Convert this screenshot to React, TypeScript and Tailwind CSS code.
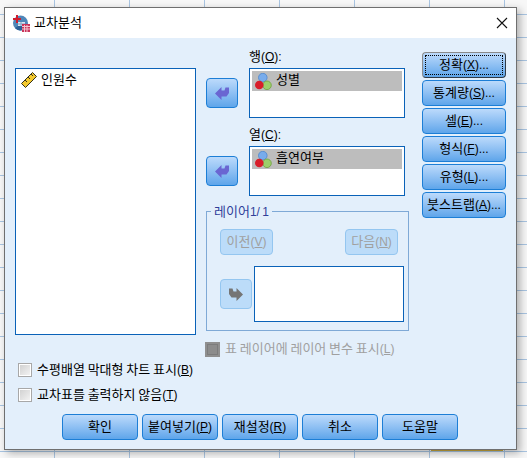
import type { ReactNode } from "react";

const blueBtn =
  "flex items-center justify-center rounded-[4px] border border-[#1c7ed6] bg-gradient-to-b from-[#bcdafb] to-[#5ea5ea] pb-[2px] text-black";

function Label({ text, hot, tail = "" }: { text: string; hot: string; tail?: string }) {
  return (
    <span className="whitespace-nowrap [word-spacing:-0.8px]">
      {text}
      <span className="text-[12px]">
        (<u>{hot}</u>){tail}
      </span>
    </span>
  );
}

function TitleIcon() {
  return (
    <svg width="17" height="17" viewBox="0 0 17 17" className="shrink-0">
      <circle cx="7.500" cy="8" r="7.500" fill="#4f86b8" />
      <path d="M2 13a7.500 7.500 0 0 0 10 1l-4-5z" fill="#2c5f96" />
      <rect x="5" y="7" width="7" height="4" fill="#d7e6f2" />
      <path d="M5 9h7M8 7v4" stroke="#7fa3c4" />
      <path d="M3 0h2v3h3v2H5v3H3V5H0V3h3z" fill="#d01c2c" />
      <rect x="9" y="9" width="8" height="8" fill="#c9345a" />
      <path d="M9 11.500h8M9 14h8M11.500 10v7M14 10v7" stroke="#f3c4cf" />
    </svg>
  );
}

function RulerIcon() {
  return (
    <svg width="16" height="16" viewBox="0 0 16 16" className="shrink-0">
      <path d="M0.500 11.500 11.500 0.500 15.500 4.500 4.500 15.500z" fill="#f4c92e" stroke="#33301c" />
      <path d="M4 8l2 2M7 5l2 2M10 2l2 2" stroke="#33301c" />
    </svg>
  );
}

function BallsIcon() {
  return (
    <svg width="17" height="17" viewBox="0 0 17 17" className="shrink-0">
      <circle cx="7.800" cy="4.600" r="4.300" fill="#78acec" stroke="#4f86cc" strokeWidth="0.800" />
      <circle cx="12" cy="12.300" r="4.300" fill="#9ccf6a" stroke="#6ea23f" strokeWidth="0.800" />
      <circle cx="4.300" cy="12" r="4.300" fill="#d81e2a" />
    </svg>
  );
}

function ArrowButton({ disabled }: { disabled?: boolean }) {
  return (
    <div
      className={
        disabled
          ? "flex h-[30px] w-[32px] shrink-0 items-center justify-center rounded-[4px] border border-[#94c6f0] bg-[#bcdcf9]"
          : "flex h-[30px] w-[32px] shrink-0 items-center justify-center rounded-[4px] border border-[#1c7ed6] bg-gradient-to-b from-[#bcdafb] to-[#5ea5ea]"
      }
    >
      <svg width="14" height="13" viewBox="0 0 14 13" className={disabled ? "scale-x-[-1]" : ""}>
        <path
          d="M0 6.500 6.500 0V3.500H9.500L10.500 0.500H14V6L11.500 9.500H6.500V13z"
          fill={disabled ? "#757575" : "#6a66d2"}
        />
      </svg>
    </div>
  );
}

function TargetList({ item }: { item: string }) {
  return (
    <div className="h-[50px] w-[156px] border border-[#0a62b8] bg-white p-[2px] pb-0">
      <div className="flex h-[20px] w-[150px] items-center gap-[4px] bg-[#bdbdbd] pl-[3px]">
        <BallsIcon />
        <span className="mb-[3px]">{item}</span>
      </div>
    </div>
  );
}

function Check({ children }: { children: ReactNode }) {
  return (
    <div className="flex h-[14px] items-center gap-[5px]">
      <div className="h-[14px] w-[14px] border border-[#a8a8a8] bg-white p-[1px]">
        <div className="h-full w-full bg-gradient-to-br from-[#d2d2d2] to-[#f2f2f2]" />
      </div>
      <span className="mb-[2px]">{children}</span>
    </div>
  );
}

const sideButtons = [
  { text: "통계량", hot: "S" },
  { text: "셀", hot: "E" },
  { text: "형식", hot: "F" },
  { text: "유형", hot: "L" },
  { text: "붓스트랩", hot: "A" },
];

export default function App() {
  return (
    <div className="h-[458px] w-[527px] overflow-hidden bg-[#f7f7f7] bg-[linear-gradient(#c8a83c,#c8a83c),linear-gradient(to_right,#a9c5e2_1px,transparent_1px),linear-gradient(to_bottom,#a9c5e2_1px,transparent_1px)] bg-[size:72px_1px,75px_100%,100%_23px] bg-[position:431px_450px,54px_0,0_14px] [background-repeat:no-repeat,repeat,repeat] pl-[4px] pt-[7px] font-['Liberation_Sans','Noto_Sans_CJK_KR',sans-serif] text-[13px] leading-none text-black">
      <div className="flex h-[443px] w-[513px] flex-col border border-[#6f6f6f] bg-[#e3effb] shadow-[3px_3px_8px_rgba(0,0,0,0.3)]">
        <div className="flex h-[30px] shrink-0 items-center bg-white pl-[8px] pr-[7px]">
          <TitleIcon />
          <span className="mb-[2px] ml-[4px]">교차분석</span>
          <svg width="14" height="14" viewBox="0 0 14 14" className="ml-auto">
            <path d="M2 2l10 10M12 2 2 12" stroke="#111" strokeWidth="1.100" />
          </svg>
        </div>

        <div className="flex h-[319px] shrink-0 pl-[10px]">
          <div className="mt-[30px] flex h-[267px] w-[181px] items-start gap-[4px] border border-[#0a62b8] bg-white pl-[5px] pt-[3px]">
            <RulerIcon />
            <span className="mt-[1px]">인원수</span>
          </div>

          <div className="ml-[10px] w-[203px] pt-[10px]">
            <div className="pl-[43px]">
              <div className="flex h-[20px] items-start pt-[2px]">
                <Label text="행" hot="O" tail=":" />
              </div>
            </div>
            <div className="flex items-center gap-[11px]">
              <ArrowButton />
              <TargetList item="성별" />
            </div>

            <div className="mt-[8px] pl-[43px]">
              <div className="flex h-[20px] items-start pt-[2px]">
                <Label text="열" hot="C" tail=":" />
              </div>
            </div>
            <div className="flex items-center gap-[11px]">
              <ArrowButton />
              <TargetList item="흡연여부" />
            </div>

            <div className="relative mt-[15px] h-[120px] w-[203px] border border-[#7fa9d6] pb-0 pl-[13px] pr-[4px] pt-[17px]">
              <span className="absolute left-[4px] top-[-7px] bg-[#e3effb] px-[3px] text-[#30409a] [word-spacing:-1px]">
                레이어<span className="text-[12px]">1/ 1</span>
              </span>
              <div className="flex justify-between pr-[6px]">
                <div className="flex h-[26px] w-[53px] items-center justify-center rounded-[4px] border border-[#94c6f0] bg-[#bcdcf9] pb-[2px] text-[#a0a0a0]">
                  <Label text="이전" hot="V" />
                </div>
                <div className="flex h-[26px] w-[53px] items-center justify-center rounded-[4px] border border-[#94c6f0] bg-[#bcdcf9] pb-[2px] text-[#a0a0a0]">
                  <Label text="다음" hot="N" />
                </div>
              </div>
              <div className="mt-[11px] flex items-center gap-[2px]">
                <ArrowButton disabled />
                <div className="h-[56px] w-[150px] border border-[#0a62b8] bg-white" />
              </div>
            </div>

            <div className="-ml-[1px] mt-[11px] flex h-[15px] items-center gap-[5px] text-[#a0a0a0]">
              <div className="h-[15px] w-[15px] border-2 border-[#8f8f8f] bg-[#7c7c7c] p-[1px]">
                <div className="h-full w-full bg-[#8c8c8c]" />
              </div>
              <span className="mb-[2px]">
                <Label text="표 레이어에 레이어 변수 표시" hot="L" />
              </span>
            </div>
          </div>

          <div className="ml-[13px] mt-[14px] flex w-[84px] flex-col gap-[2px]">
            <div className="h-[26px] rounded-[4px] border border-[#8a8a8a] border-b-[#2f3b48] border-r-[#2f3b48] bg-gradient-to-b from-[#bcdafb] to-[#5ea5ea] p-[2px]">
              <div className="flex h-full items-center justify-center border border-dotted border-black pb-[2px]">
                <Label text="정확" hot="X" tail="..." />
              </div>
            </div>
            {sideButtons.map((b) => (
              <div key={b.hot} className={`${blueBtn} h-[26px]`}>
                <Label text={b.text} hot={b.hot} tail="..." />
              </div>
            ))}
          </div>
        </div>

        <div className="ml-[13px] mt-[6px] flex flex-col gap-[11px]">
          <Check>
            <Label text="수평배열 막대형 차트 표시" hot="B" />
          </Check>
          <Check>
            <Label text="교차표를 출력하지 않음" hot="T" />
          </Check>
        </div>

        <div className="ml-[57px] mt-[12px] flex gap-[4px]">
          <div className={`${blueBtn} h-[26px] w-[76px]`}>확인</div>
          <div className={`${blueBtn} h-[26px] w-[76px]`}>
            <Label text="붙여넣기" hot="P" />
          </div>
          <div className={`${blueBtn} h-[26px] w-[76px]`}>
            <Label text="재설정" hot="R" />
          </div>
          <div className={`${blueBtn} h-[26px] w-[76px]`}>취소</div>
          <div className={`${blueBtn} h-[26px] w-[76px]`}>도움말</div>
        </div>
      </div>
    </div>
  );
}
